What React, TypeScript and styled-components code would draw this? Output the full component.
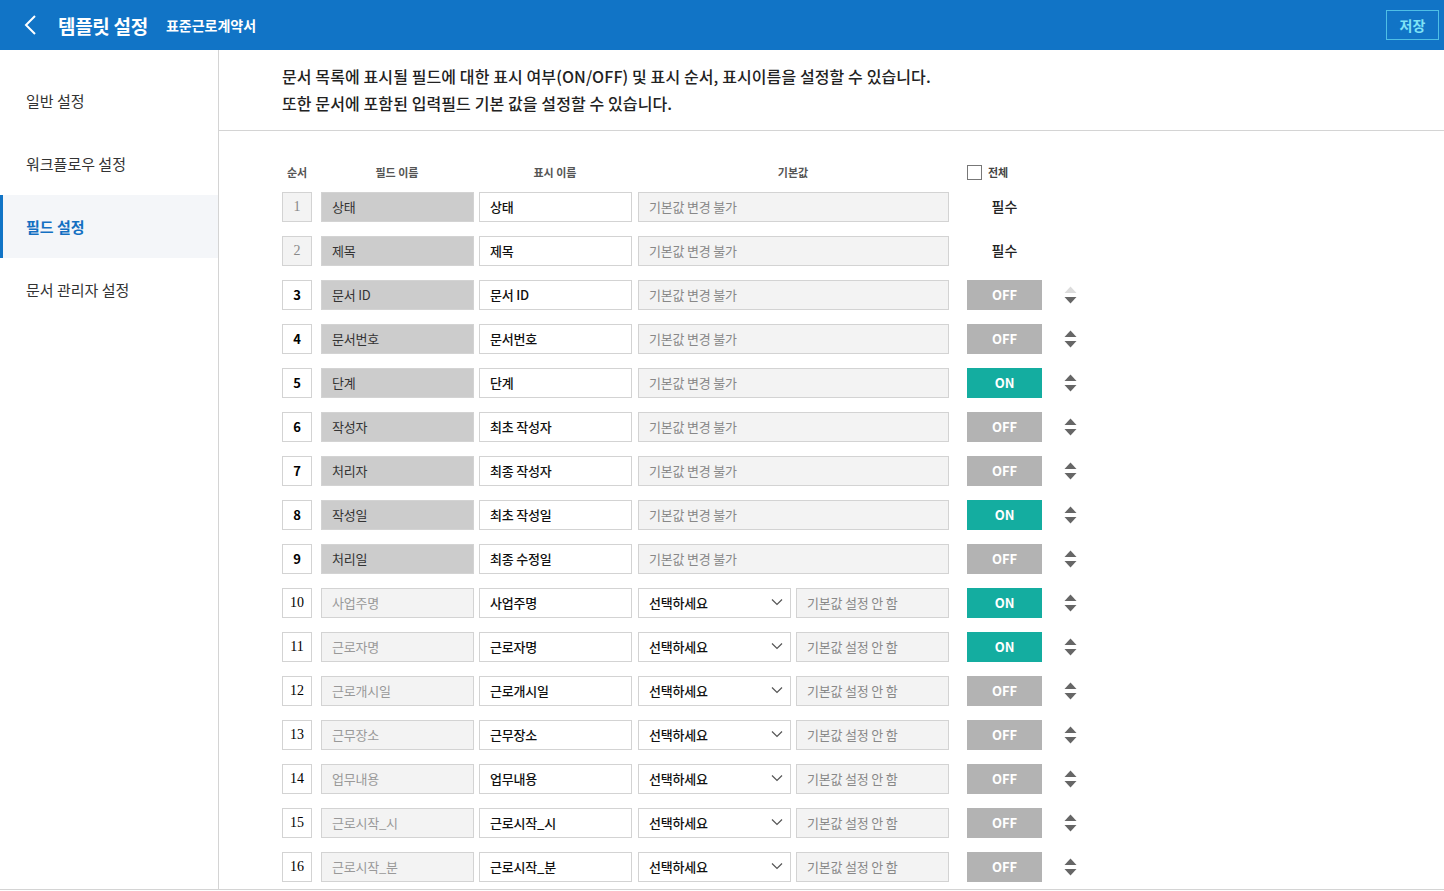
import styled, { createGlobalStyle } from 'styled-components';

const GlobalStyle = createGlobalStyle`
  html, body {
    margin: 0;
    padding: 0;
    background: #fff;
    font-family: "Noto Sans CJK KR", "Noto Sans", sans-serif;
    color: #222;
  }
  * { box-sizing: border-box; }
`;

const Page = styled.div`
  width: 1444px;
  height: 891px;
  overflow: hidden;
  display: flex;
  flex-direction: column;
`;

const Header = styled.header`
  height: 50px;
  flex: none;
  background: #1174c6;
  display: flex;
  align-items: center;
  padding: 0 5px 0 22px;
`;

const BackButton = styled.button`
  width: 18px;
  height: 24px;
  padding: 0;
  border: none;
  background: none;
  display: flex;
  align-items: center;
  justify-content: center;
  margin-right: 18px;
`;

const Title = styled.h1`
  margin: 0 18px 0 0;
  font-size: 19px;
  font-weight: 700;
  color: #fff;
  letter-spacing: -0.3px;
`;

const SubTitle = styled.span`
  font-size: 14px;
  font-weight: 700;
  color: #fff;
`;

const SaveButton = styled.button`
  margin-left: auto;
  width: 53px;
  height: 30px;
  border: 1px solid #4fbfe6;
  background: transparent;
  color: #7fe3f6;
  font-family: inherit;
  font-size: 14px;
  font-weight: 700;
`;

const Body = styled.div`
  flex: 1;
  display: flex;
  min-height: 0;
  border-bottom: 1px solid #d4d4d4;
  margin-bottom: 1px;
`;

const Sidebar = styled.nav`
  width: 219px;
  flex: none;
  border-right: 1px solid #d4d4d4;
  padding-top: 19px;
`;

const MenuItem = styled.div<{ $active?: boolean }>`
  height: 63px;
  display: flex;
  align-items: center;
  font-size: 15px;
  color: ${p => (p.$active ? '#1470c2' : '#333')};
  font-weight: ${p => (p.$active ? 700 : 400)};
  background: ${p => (p.$active ? '#f4f6f9' : 'transparent')};
  border-left: 3px solid ${p => (p.$active ? '#1174c6' : 'transparent')};
  padding-left: 23px;
`;

const Main = styled.main`
  flex: 1;
  overflow: hidden;
`;

const Description = styled.div`
  padding: 13px 0 13px 63px;
  border-bottom: 1px solid #d4d4d4;
  font-size: 16px;
  font-weight: 500;
  line-height: 27px;
  color: #222;
  letter-spacing: 0.1px;
`;

const Table = styled.div`
  padding: 31px 0 0 63px;
`;

const Row = styled.div`
  display: flex;
  align-items: center;
  height: 30px;
  margin-bottom: 14px;
`;

const HeadRow = styled(Row)`
  height: 20px;
  margin-bottom: 10px;
`;

const HeadCell = styled.div<{ $w: number; $mr: number }>`
  width: ${p => p.$w}px;
  margin-right: ${p => p.$mr}px;
  text-align: center;
  font-size: 11px;
  font-weight: 700;
  color: #555;
`;

const AllCheck = styled.label`
  display: flex;
  align-items: center;
  gap: 6px;
  font-size: 11px;
  font-weight: 700;
  color: #444;
`;

const CheckBox = styled.span`
  width: 15px;
  height: 15px;
  border: 1px solid #777;
  background: #fff;
`;

const OrderBox = styled.div<{ $fixed?: boolean; $serif?: boolean }>`
  width: 30px;
  height: 30px;
  margin-right: 9px;
  border: 1px solid #d3d3d3;
  background: ${p => (p.$fixed ? '#f3f3f3' : '#fff')};
  color: ${p => (p.$fixed ? '#888' : '#000')};
  display: flex;
  align-items: center;
  justify-content: center;
  padding-bottom: 1px;
  font-size: ${p => (p.$serif ? 14 : 13)}px;
  font-weight: ${p => (p.$serif ? 400 : 700)};
  font-family: ${p => (p.$serif ? '"Liberation Serif", serif' : 'inherit')};
`;

const Field = styled.div<{ $w: number; $mr: number; $bg: string; $color: string; $weight?: number }>`
  width: ${p => p.$w}px;
  height: 30px;
  margin-right: ${p => p.$mr}px;
  border: 1px solid #d3d3d3;
  background: ${p => p.$bg};
  color: ${p => p.$color};
  font-weight: ${p => p.$weight ?? 400};
  font-size: 13px;
  display: flex;
  align-items: center;
  padding: 0 0 2px 10px;
  letter-spacing: -0.2px;
`;

const Select = styled(Field)`
  justify-content: space-between;
  padding-right: 6px;
`;

const Toggle = styled.button<{ $on: boolean }>`
  width: 75px;
  height: 30px;
  margin-right: 22px;
  padding: 0 0 2px;
  border: none;
  background: ${p => (p.$on ? '#14ada0' : '#b3b3b3')};
  color: #fff;
  font-family: inherit;
  font-size: 13px;
  font-weight: 700;
`;

const Required = styled.div`
  width: 75px;
  text-align: center;
  font-size: 14px;
  font-weight: 500;
  color: #222;
  padding-bottom: 2px;
`;

const Chevron = () => (
  <svg width="14" height="14" viewBox="0 0 14 14">
    <polyline points="2,4.5 7,9.5 12,4.5" fill="none" stroke="#555" strokeWidth="1.2" />
  </svg>
);

const SortArrows = ({ upDisabled }: { upDisabled?: boolean }) => (
  <svg width="13" height="20" viewBox="0 0 13 20">
    <polygon points="0.5,8 6.5,1.5 12.5,8" fill={upDisabled ? '#dcdcdc' : '#666'} />
    <polygon points="0.5,12 12.5,12 6.5,18.5" fill="#666" />
  </svg>
);

type RowData = {
  field: string;
  display: string;
  on?: boolean;
  required?: boolean;
};

const rows: RowData[] = [
  { field: '상태', display: '상태', required: true },
  { field: '제목', display: '제목', required: true },
  { field: '문서 ID', display: '문서 ID', on: false },
  { field: '문서번호', display: '문서번호', on: false },
  { field: '단계', display: '단계', on: true },
  { field: '작성자', display: '최초 작성자', on: false },
  { field: '처리자', display: '최종 작성자', on: false },
  { field: '작성일', display: '최초 작성일', on: true },
  { field: '처리일', display: '최종 수정일', on: false },
  { field: '사업주명', display: '사업주명', on: true },
  { field: '근로자명', display: '근로자명', on: true },
  { field: '근로개시일', display: '근로개시일', on: false },
  { field: '근무장소', display: '근무장소', on: false },
  { field: '업무내용', display: '업무내용', on: false },
  { field: '근로시작_시', display: '근로시작_시', on: false },
  { field: '근로시작_분', display: '근로시작_분', on: false },
];

const menus = ['일반 설정', '워크플로우 설정', '필드 설정', '문서 관리자 설정'];

export default function App(): JSX.Element {
  return (
    <Page>
      <GlobalStyle />
      <Header>
        <BackButton>
          <svg width="14" height="22" viewBox="0 0 14 22">
            <polyline points="11,2 2,11 11,20" fill="none" stroke="#fff" strokeWidth="2" />
          </svg>
        </BackButton>
        <Title>템플릿 설정</Title>
        <SubTitle>표준근로계약서</SubTitle>
        <SaveButton>저장</SaveButton>
      </Header>
      <Body>
        <Sidebar>
          {menus.map(m => (
            <MenuItem key={m} $active={m === '필드 설정'}>
              {m}
            </MenuItem>
          ))}
        </Sidebar>
        <Main>
          <Description>
            문서 목록에 표시될 필드에 대한 표시 여부(ON/OFF) 및 표시 순서, 표시이름을 설정할 수 있습니다.
            <br />
            또한 문서에 포함된 입력필드 기본 값을 설정할 수 있습니다.
          </Description>
          <Table>
            <HeadRow>
              <HeadCell $w={30} $mr={9}>순서</HeadCell>
              <HeadCell $w={152} $mr={6}>필드 이름</HeadCell>
              <HeadCell $w={152} $mr={7}>표시 이름</HeadCell>
              <HeadCell $w={310} $mr={19}>기본값</HeadCell>
              <AllCheck>
                <CheckBox />
                전체
              </AllCheck>
            </HeadRow>
            {rows.map((r, i) => {
              const n = i + 1;
              const input = n >= 10;
              return (
                <Row key={n}>
                  <OrderBox $fixed={r.required} $serif={r.required || n >= 10}>
                    {n}
                  </OrderBox>
                  <Field
                    $w={153}
                    $mr={5}
                    $bg={input ? '#f3f3f3' : '#cccccc'}
                    $color={input ? '#999' : '#333'}
                  >
                    {r.field}
                  </Field>
                  <Field $w={153} $mr={6} $bg="#fff" $color="#111" $weight={500}>
                    {r.display}
                  </Field>
                  {input ? (
                    <>
                      <Select $w={153} $mr={5} $bg="#fff" $color="#111" $weight={500}>
                        선택하세요
                        <Chevron />
                      </Select>
                      <Field $w={153} $mr={18} $bg="#f3f3f3" $color="#888">
                        기본값 설정 안 함
                      </Field>
                    </>
                  ) : (
                    <Field $w={311} $mr={18} $bg="#f3f3f3" $color="#888">
                      기본값 변경 불가
                    </Field>
                  )}
                  {r.required ? (
                    <Required>필수</Required>
                  ) : (
                    <>
                      <Toggle $on={!!r.on}>{r.on ? 'ON' : 'OFF'}</Toggle>
                      <SortArrows upDisabled={n === 3} />
                    </>
                  )}
                </Row>
              );
            })}
          </Table>
        </Main>
      </Body>
    </Page>
  );
}
